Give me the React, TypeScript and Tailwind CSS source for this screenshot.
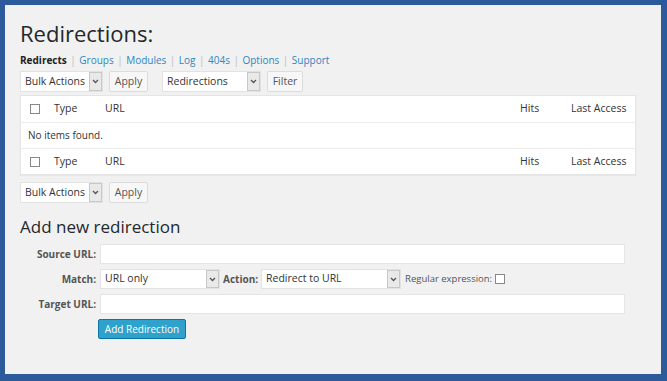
import React from 'react'

const font = { fontFamily: '"Open Sans", "DejaVu Sans", sans-serif' }

function Chevron() {
  return (
    <svg width="7" height="5" viewBox="0 0 7 5" className="text-[#555]">
      <path d="M1 1l2.5 2.5L6 1" fill="none" stroke="currentColor" strokeWidth="1.3" />
    </svg>
  )
}

function FakeSelect({ label, width, height = 'h-[21px]' }: { label: string; width: string; height?: string }) {
  return (
    <div className={`flex ${height} items-stretch bg-white border border-[#e2e2e2] ${width}`}>
      <span className="flex-1 flex items-center pl-[4px] text-[#333] text-[10.5px] whitespace-nowrap overflow-hidden">{label}</span>
      <span className="w-[13px] flex items-center justify-center bg-[#e9e9e9] border border-[#c8c8c8]">
        <Chevron />
      </span>
    </div>
  )
}

function Button({ children, width }: { children: React.ReactNode; width: string }) {
  return (
    <button className={`h-[21px] ${width} bg-[#f7f7f7] border border-[#dcdcdc] rounded-[2px] text-[10.5px] text-[#555] flex items-center justify-center`}>
      {children}
    </button>
  )
}

function Checkbox() {
  return <span className="inline-block w-[10px] h-[10px] border border-[#888] bg-white" />
}

function TableRow({ children, border }: { children: React.ReactNode; border?: boolean }) {
  return (
    <div className={`flex items-center h-[26px] text-[10.5px] text-[#333] ${border ? 'border-t border-[#ececec]' : ''}`}>
      {children}
    </div>
  )
}

function HeaderCells() {
  return (
    <>
      <span className="w-[33px] pl-[9px] flex items-center"><Checkbox /></span>
      <span className="w-[51px]">Type</span>
      <span className="flex-1">URL</span>
      <span className="w-[51px]">Hits</span>
      <span className="w-[64px]">Last Access</span>
    </>
  )
}

export default function App() {
  const links = ['Groups', 'Modules', 'Log', '404s', 'Options', 'Support']
  return (
    <div className="w-[667px] h-[381px] bg-[#2c5a9a] pt-[5px] pl-[5px] pr-[6px] pb-[7px]" style={font}>
      <div className="h-full bg-[#f1f1f1] pl-[15px] pr-[25px] pt-[13px]">
        <h1 className="text-[22px] leading-[30px] text-[#23282d]">Redirections:</h1>

        <div className="mt-[5px] text-[10px] leading-[14px] flex items-center gap-[3.5px]">
          <span className="font-bold text-[#222]">Redirects</span>
          {links.map((l) => (
            <React.Fragment key={l}>
              <span className="text-[#bbb]">|</span>
              <span className="text-[#2f86c0]">{l}</span>
            </React.Fragment>
          ))}
        </div>

        <div className="mt-[4px] flex items-center">
          <FakeSelect label="Bulk Actions" width="w-[83px]" />
          <span className="ml-[6px]"><Button width="w-[39px]">Apply</Button></span>
          <span className="ml-[14px]"><FakeSelect label="Redirections" width="w-[99px]" /></span>
          <span className="ml-[6px]"><Button width="w-[36px]">Filter</Button></span>
        </div>

        <div className="mt-[3px] bg-white border border-[#e5e5e5] shadow-[0_1px_1px_rgba(0,0,0,0.04)]">
          <TableRow><HeaderCells /></TableRow>
          <TableRow border><span className="pl-[7px] text-[10px]">No items found.</span></TableRow>
          <TableRow border><HeaderCells /></TableRow>
        </div>

        <div className="mt-[7px] flex items-center">
          <FakeSelect label="Bulk Actions" width="w-[83px]" />
          <span className="ml-[6px]"><Button width="w-[39px]">Apply</Button></span>
        </div>

        <h2 className="mt-[12px] text-[17px] leading-[24px] text-[#23282d]">Add new redirection</h2>

        <div className="mt-[5px] flex flex-col gap-[5px] text-[10px]">
          <div className="flex items-center">
            <span className="w-[80px] pr-[4px] text-right font-bold text-[#555]">Source URL:</span>
            <div className="w-[525px] h-[20px] bg-white border border-[#e5e5e5]" />
          </div>
          <div className="flex items-center">
            <span className="w-[80px] pr-[4px] text-right font-bold text-[#555]">Match:</span>
            <FakeSelect label="URL only" width="w-[120px]" height="h-[20px]" />
            <span className="ml-[3px] mr-[3px] font-bold text-[#555]">Action:</span>
            <FakeSelect label="Redirect to URL" width="w-[140px]" height="h-[20px]" />
            <span className="ml-[4px] text-[9.5px] text-[#555]">Regular expression:</span>
            <span className="ml-[3px] flex"><Checkbox /></span>
          </div>
          <div className="flex items-center">
            <span className="w-[80px] pr-[4px] text-right font-bold text-[#555]">Target URL:</span>
            <div className="w-[525px] h-[20px] bg-white border border-[#e5e5e5]" />
          </div>
          <div className="pl-[78px]">
            <button className="h-[20px] w-[88px] bg-[#2ea2cc] border border-[#0c74a5] rounded-[2px] text-[10px] text-white">
              Add Redirection
            </button>
          </div>
        </div>
      </div>
    </div>
  )
}
